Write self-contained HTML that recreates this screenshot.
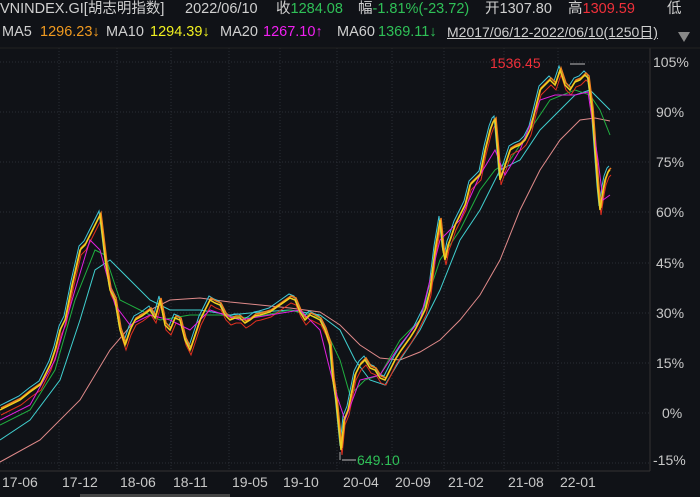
<!DOCTYPE html>
<html><head><meta charset="utf-8"><style>
body{margin:0;width:700px;height:497px;background:#101217;overflow:hidden;font-family:"Liberation Sans","Noto Sans CJK SC",sans-serif;color:#d0d0d0;position:relative}
.t{position:absolute;white-space:nowrap;font-size:14.5px;line-height:18px}
.g{color:#2fc057}.red{color:#f0303a}.o{color:#f09a20}.y{color:#f0f020}.m{color:#f020f0}
svg{position:absolute;left:0;top:0}
</style></head><body>
<svg width="700" height="497" viewBox="0 0 700 497">
<defs>
<polyline id="p" fill="none" points="0,410 10,405 20,400 30,392 40,385 50,365 55,350 60,330 65,320 72,285 80,250 85,245 90,235 95,225 100,215 103,240 106,265 110,290 115,300 120,330 125,345 130,330 135,320 142,316 150,310 155,318 160,300 165,325 170,330 175,318 180,320 185,340 190,350 195,335 200,320 205,310 210,300 215,303 220,305 225,315 230,320 235,318 240,318 245,323 250,320 255,316 260,315 270,312 280,305 290,298 295,300 300,312 305,320 310,315 320,320 325,330 330,345 333,380 336,400 339,430 341,450 344,420 348,410 352,390 355,375 360,365 365,360 370,368 375,370 380,378 385,380 390,370 395,360 400,352 405,345 410,338 415,330 420,320 425,310 430,290 435,250 438,232 440,220 443,250 445,260 448,245 450,240 455,225 460,215 465,205 470,185 475,180 480,175 485,150 490,130 493,122 495,120 498,155 500,180 505,165 510,150 515,147 520,145 525,140 530,130 535,110 540,90 545,85 550,80 555,85 560,70 565,85 570,90 575,82 580,80 585,75 588,78 592,110 595,150 598,190 600,210 603,190 605,180 608,172 610,170"/>
</defs>
<g stroke="#2a2d35" stroke-dasharray="1,2" stroke-width="1">
<line x1="0" y1="62" x2="650" y2="62"/><line x1="0" y1="112" x2="650" y2="112"/><line x1="0" y1="162" x2="650" y2="162"/><line x1="0" y1="212" x2="650" y2="212"/><line x1="0" y1="263" x2="650" y2="263"/><line x1="0" y1="313" x2="650" y2="313"/><line x1="0" y1="363" x2="650" y2="363"/><line x1="0" y1="413" x2="650" y2="413"/><line x1="0" y1="463" x2="650" y2="463"/>
<line x1="59" y1="48" x2="59" y2="471"/><line x1="117" y1="48" x2="117" y2="471"/><line x1="171" y1="48" x2="171" y2="471"/><line x1="229" y1="48" x2="229" y2="471"/><line x1="280" y1="48" x2="280" y2="471"/><line x1="337" y1="48" x2="337" y2="471"/><line x1="392" y1="48" x2="392" y2="471"/><line x1="444" y1="48" x2="444" y2="471"/><line x1="504" y1="48" x2="504" y2="471"/><line x1="558" y1="48" x2="558" y2="471"/>
</g>
<line x1="650" y1="48" x2="650" y2="471" stroke="#333"/>
<line x1="0" y1="471" x2="650" y2="471" stroke="#333"/>
<line x1="0" y1="48" x2="700" y2="48" stroke="#222"/>
<g fill="none" stroke-width="1">
<polyline stroke="#e08a8a" points="0,462 40,440 80,400 110,350 140,315 170,300 200,298 230,302 260,305 290,308 320,312 340,325 360,345 380,358 400,360 420,352 440,340 460,320 480,295 500,260 520,210 540,170 560,140 580,120 595,118 610,121"/>
<polyline stroke="#40d0d0" points="0,440 30,420 60,380 80,320 95,270 110,260 130,280 150,300 170,310 200,310 230,315 260,312 290,310 320,315 340,330 355,360 370,380 385,385 400,360 420,330 440,290 460,240 480,210 500,170 520,160 540,130 560,110 575,95 590,90 610,110"/>
<polyline stroke="#20b040" points="0,425 30,410 55,370 75,300 95,250 105,255 120,300 140,310 160,320 190,315 220,315 250,318 290,310 320,318 340,360 350,395 365,380 380,375 400,340 420,320 440,260 460,230 480,190 495,170 510,160 530,130 550,100 575,90 590,95 600,110 610,135"/>
<use href="#p" stroke="#e03020" transform="translate(1,5)"/>
<use href="#p" stroke="#40c8d8" transform="translate(-1,-4)"/>
<use href="#p" stroke="#f08020" stroke-width="1.5" transform="translate(1,-2)"/>
<polyline stroke="#e020e0" points="0,420 30,405 55,360 75,290 90,240 100,250 115,305 130,325 150,315 170,320 190,330 210,310 240,320 270,315 300,310 320,330 335,390 345,420 360,380 380,375 400,345 420,320 440,240 460,220 480,175 495,150 505,175 520,150 540,100 555,95 575,95 588,92 598,160 603,200 610,195"/>
<use href="#p" stroke="#f0d020" stroke-width="1.5"/>
</g>
<line x1="340" y1="452" x2="340" y2="460" stroke="#aaa"/>
<text x="490" y="68" fill="#f0303a" font-size="14" font-family="Liberation Sans">1536.45</text>
<line x1="570" y1="64" x2="585" y2="64" stroke="#bbb"/>
<text x="357" y="465" fill="#2fc057" font-size="14" font-family="Liberation Sans">649.10</text>
<line x1="342" y1="460" x2="356" y2="460" stroke="#bbb"/>
<g fill="#c8c8c8" font-size="14" font-family="Liberation Sans">
<text x="653" y="67">105%</text><text x="656" y="117">90%</text><text x="656" y="167">75%</text><text x="656" y="217">60%</text><text x="656" y="268">45%</text><text x="656" y="318">30%</text><text x="656" y="368">15%</text><text x="662" y="418">0%</text><text x="653" y="465">-15%</text>
<text x="2" y="487">17-06</text><text x="62" y="487">17-12</text><text x="120" y="487">18-06</text><text x="173" y="487">18-11</text><text x="232" y="487">19-05</text><text x="283" y="487">19-10</text><text x="343" y="487">20-04</text><text x="395" y="487">20-09</text><text x="448" y="487">21-02</text><text x="508" y="487">21-08</text><text x="560" y="487">22-01</text>
</g>
<rect x="80" y="494" width="150" height="3" fill="#444"/>
<polygon points="678,32 690,32 684,42" fill="#888"/>
</svg>
<div class="t" style="top:0;left:0">VNINDEX.GI[胡志明指数]</div>
<div class="t" style="top:0;left:185px">2022/06/10</div>
<div class="t" style="top:0;left:276px">收<span class="g">1284.08</span></div>
<div class="t" style="top:0;left:358px">幅<span class="g">-1.81%(-23.72)</span></div>
<div class="t" style="top:0;left:485px">开1307.80</div>
<div class="t" style="top:0;left:568px">高<span class="red">1309.59</span></div>
<div class="t" style="top:0;left:667px">低</div>
<div class="t" style="top:23px;left:2px">MA5</div>
<div class="t o" style="top:23px;left:40px">1296.23↓</div>
<div class="t" style="top:23px;left:106px">MA10</div>
<div class="t y" style="top:23px;left:150px">1294.39↓</div>
<div class="t" style="top:23px;left:220px">MA20</div>
<div class="t m" style="top:23px;left:263px">1267.10↑</div>
<div class="t" style="top:23px;left:337px">MA60</div>
<div class="t g" style="top:23px;left:378px">1369.11↓</div>
<div class="t" style="top:23px;left:447px;text-decoration:underline;font-size:14px">M2017/06/12-2022/06/10(1250日)</div>
</body></html>
